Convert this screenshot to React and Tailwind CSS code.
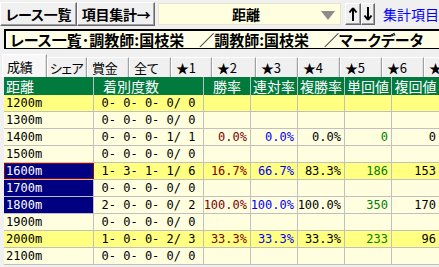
import React from 'react';

const ui = "font-['Noto_Sans_CJK_JP',sans-serif] [font-feature-settings:'palt']";
const mono = "font-['DejaVu_Sans_Mono','Noto_Sans_CJK_JP',monospace]";
const raised =
  'border border-t-white border-l-white border-r-[#696969] border-b-[#696969] shadow-[inset_-1px_-1px_0_#a0a0a0] bg-[#f0f0f0]';

const rows = [
  { d: '1200m', r: '0- 0- 0- 0/ 0', hl: true },
  { d: '1300m', r: '0- 0- 0- 0/ 0' },
  { d: '1400m', r: '0- 0- 0- 1/ 1', w: '0.0%', p: '0.0%', s: '0.0%', t: '0', f: '0' },
  { d: '1500m', r: '0- 0- 0- 0/ 0' },
  { d: '1600m', r: '1- 3- 1- 1/ 6', w: '16.7%', p: '66.7%', s: '83.3%', t: '186', f: '153', hl: true, sel: true, focus: true },
  { d: '1700m', r: '0- 0- 0- 0/ 0', sel: true },
  { d: '1800m', r: '2- 0- 0- 0/ 2', w: '100.0%', p: '100.0%', s: '100.0%', t: '350', f: '170', sel: true },
  { d: '1900m', r: '0- 0- 0- 0/ 0' },
  { d: '2000m', r: '1- 0- 0- 2/ 3', w: '33.3%', p: '33.3%', s: '33.3%', t: '233', f: '96', hl: true },
  { d: '2100m', r: '0- 0- 0- 0/ 0' },
];

const tabs = [
  { label: '成績', w: 'w-[45px]' },
  { label: 'シェア', w: 'w-[40px]' },
  { label: '賞金', w: 'w-[42px]' },
  { label: '全て', w: 'w-[42px]' },
  { label: '★1', w: 'w-[41px]' },
  { label: '★2', w: 'w-[44px]' },
  { label: '★3', w: 'w-[42px]' },
  { label: '★4', w: 'w-[42px]' },
  { label: '★5', w: 'w-[42px]' },
  { label: '★6', w: 'w-[42px]' },
  { label: '★7', w: 'w-[42px]' },
];

const Arrow = ({ down }) => (
  <svg width="10" height="16" viewBox="0 0 10 16" className={down ? 'rotate-180' : ''}>
    <path d="M5 2 V15 M5 2 L1.5 6.5 M5 2 L8.5 6.5" stroke="#000" strokeWidth="2" fill="none" />
  </svg>
);

const Cell = ({ w, className = '', children }) => (
  <div className={`${w} shrink-0 h-full border-r border-[#c0c0c0] flex items-center ${className}`}>
    {children}
  </div>
);

const App = () => {
  return (
    <div className={`w-[439px] h-[267px] overflow-hidden bg-[#f0f0f0] ${ui}`}>
      {/* toolbar */}
      <div className="h-[28px] flex items-start pt-[2px] whitespace-nowrap">
        <div className={`${raised} w-[78px] h-[24px] flex items-center justify-center text-[14px] tracking-[-0.3px] font-bold leading-none`}>
          レース一覧
        </div>
        <div className={`${raised} w-[80px] h-[24px] flex items-center justify-center text-[14px] tracking-[-0.3px] font-bold leading-none`}>
          項目集計→
        </div>
        <div className="ml-[3px] mt-[1px] w-[186px] h-[22px] bg-[#ffffe0] border border-[#e4e4d0] flex items-center relative">
          <span className="w-full text-center text-[14px] font-bold leading-none pr-[8px]">距離</span>
          <svg width="14" height="9" viewBox="0 0 14 9" className="absolute right-[5px] top-[7px]">
            <polygon points="0,0 14,0 7,9" fill="#8c8c8c" />
          </svg>
        </div>
        <div className={`${raised} ml-[4px] mt-[1px] w-[16px] h-[22px] flex items-center justify-center`}>
          <Arrow />
        </div>
        <div className={`${raised} mt-[1px] w-[14px] h-[22px] flex items-center justify-center`}>
          <Arrow down />
        </div>
        <span className="ml-[8px] mt-[2px] text-[14px] leading-[20px] text-[#0000ff]">集計項目</span>
      </div>

      {/* title */}
      <div className="h-[21px] pl-[4px] pt-[1px]">
        <div className="w-[450px] h-[20px] bg-[#ffffe8] border-l-2 border-t-2 border-b border-black pl-[4px] flex items-center whitespace-nowrap text-[15px] tracking-[0px] font-bold leading-none">
          レース一覧･調教師:国枝栄　／調教師:国枝栄　／マークデータ
        </div>
      </div>

      {/* tabs */}
      <div className="h-[28px] flex items-end pl-[2px] whitespace-nowrap">
        {tabs.map((t, i) => (
          <div
            key={t.label}
            className={`${t.w} shrink-0 ${i === 0 ? 'h-[23px] bg-[#f7f7f7]' : 'h-[20px] bg-[#f0f0f0]'} border-l border-t border-white border-r border-r-[#a0a0a0] shadow-[inset_-1px_0_0_#e0e0e0] flex items-center ${i === 1 ? 'pl-[2px] tracking-[-0.6px]' : 'pl-[4px] tracking-[-0.3px]'} text-[13px] leading-none overflow-hidden`}
          >
            {t.label}
          </div>
        ))}
      </div>

      {/* table */}
      <div className="pl-[4px]">
        <div className="h-[18px] flex bg-[#007a3d] text-white text-[14px] leading-none whitespace-nowrap">
          <Cell w="w-[90px]" className="pl-[2px]">距離</Cell>
          <Cell w="w-[110px]" className="pl-[9px]">着別度数</Cell>
          <Cell w="w-[47px]" className="justify-center">勝率</Cell>
          <Cell w="w-[47px]" className="justify-center">連対率</Cell>
          <Cell w="w-[47px]" className="justify-center">複勝率</Cell>
          <Cell w="w-[47px]" className="justify-center">単回値</Cell>
          <Cell w="w-[48px]" className="justify-center">複回値</Cell>
        </div>
        {rows.map((r) => (
          <div
            key={r.d}
            className={`h-[17px] flex border-b border-[#c0c0c0] ${r.hl ? 'bg-[#ffff80]' : 'bg-[#ffffe0]'} ${mono} text-[12px] leading-none whitespace-pre`}
          >
            <Cell
              w="w-[90px]"
              className={`pl-[2px] ${r.sel ? 'bg-[#000080] text-white' : ''} ${r.focus ? 'outline outline-1 -outline-offset-1 outline-[#a00000]' : ''}`}
            >
              {r.d}
            </Cell>
            <Cell w="w-[110px]" className="justify-center">{r.r}</Cell>
            <Cell w="w-[47px]" className="justify-end pr-[3px] text-[#800000]">{r.w}</Cell>
            <Cell w="w-[47px]" className="justify-end pr-[3px] text-[#0000ff]">{r.p}</Cell>
            <Cell w="w-[47px]" className="justify-end pr-[3px]">{r.s}</Cell>
            <Cell w="w-[47px]" className="justify-end pr-[3px] text-[#008000]">{r.t}</Cell>
            <Cell w="w-[48px]" className="justify-end pr-[3px]">{r.f}</Cell>
          </div>
        ))}
      </div>
    </div>
  );
};

export default App;
